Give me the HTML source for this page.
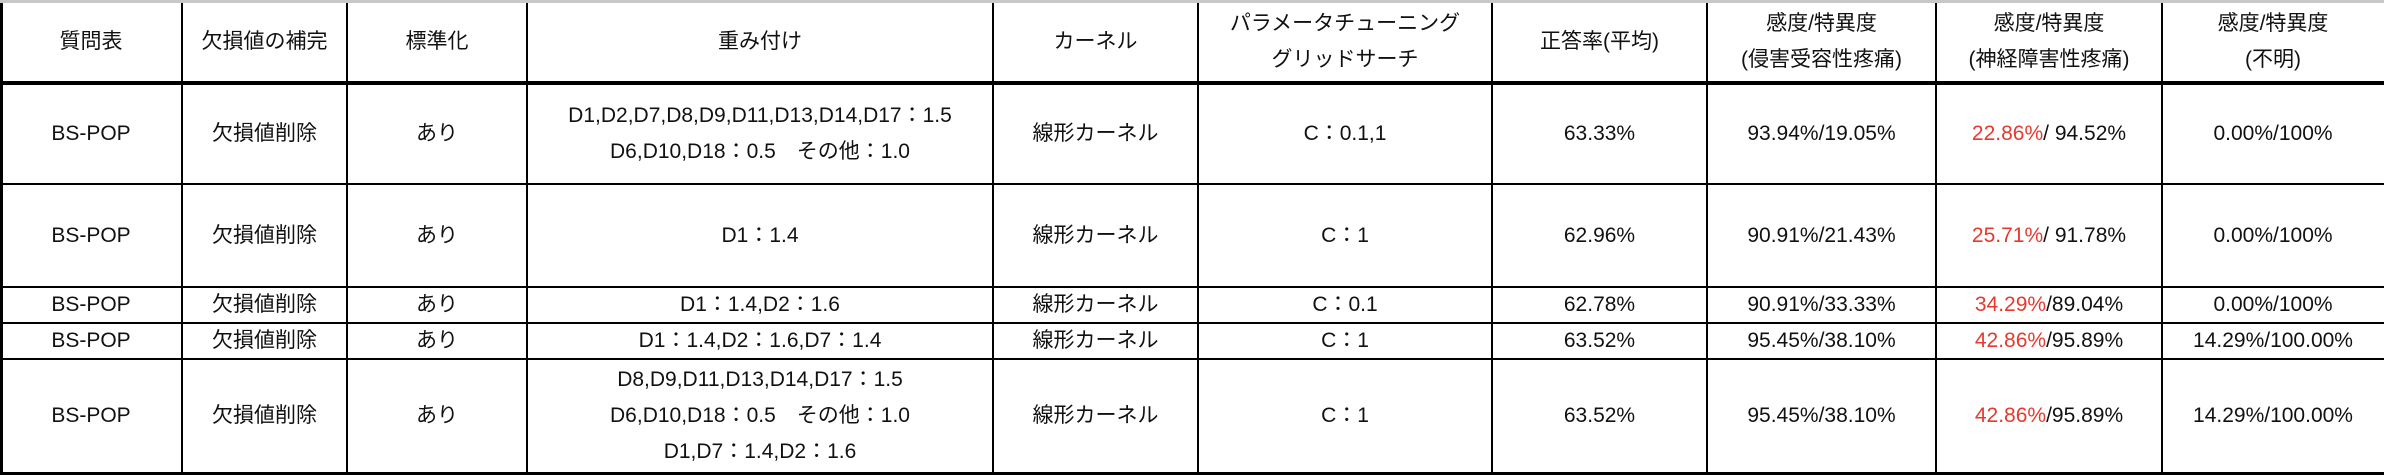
<!DOCTYPE html>
<html><head><meta charset="utf-8"><style>
body{margin:0;width:2384px;height:475px;background:#fff;overflow:hidden;position:relative;font-family:"Liberation Sans","Noto Sans CJK JP",sans-serif;font-size:21px;color:#111}
.c{position:absolute;display:flex;flex-direction:column;align-items:center;justify-content:center;text-align:center;line-height:36px;white-space:nowrap}
.h{position:absolute;left:0;width:2384px;background:#000}
.v{position:absolute;width:2px;background:#000}
.r{color:#e53a2e}
</style></head><body>
<div class="h" style="top:0;height:3px;background:#c8c8c8"></div>
<div class="h" style="top:81px;height:4px"></div>
<div class="h" style="top:183px;height:2px"></div>
<div class="h" style="top:286px;height:2px"></div>
<div class="h" style="top:322px;height:2px"></div>
<div class="h" style="top:358px;height:2px"></div>
<div class="h" style="top:472px;height:3px"></div>
<div class="v" style="left:0;top:3px;height:472px;width:3px"></div>
<div class="v" style="left:181px;top:3px;height:472px"></div>
<div class="v" style="left:346px;top:3px;height:472px"></div>
<div class="v" style="left:526px;top:3px;height:472px"></div>
<div class="v" style="left:992px;top:3px;height:472px"></div>
<div class="v" style="left:1197px;top:3px;height:472px"></div>
<div class="v" style="left:1491px;top:3px;height:472px"></div>
<div class="v" style="left:1706px;top:3px;height:472px"></div>
<div class="v" style="left:1935px;top:3px;height:472px"></div>
<div class="v" style="left:2161px;top:3px;height:472px"></div>
<div id="t"></div>
<script>
var X=[0,182,347,527,993,1198,1492,1707,1936,2162,2384];
var Y=[[3,81],[85,183],[185,286],[288,322],[324,358],[360,472]];
var R=[
["質問表","欠損値の補完","標準化","重み付け","カーネル","パラメータチューニング<br>グリッドサーチ","正答率(平均)","感度/特異度<br>(侵害受容性疼痛)","感度/特異度<br>(神経障害性疼痛)","感度/特異度<br>(不明)"],
["BS-POP","欠損値削除","あり","D1,D2,D7,D8,D9,D11,D13,D14,D17：1.5<br>D6,D10,D18：0.5　その他：1.0","線形カーネル","C：0.1,1","63.33%","93.94%/19.05%","<span><span class=r>22.86%</span>/ 94.52%</span>","0.00%/100%"],
["BS-POP","欠損値削除","あり","D1：1.4","線形カーネル","C：1","62.96%","90.91%/21.43%","<span><span class=r>25.71%</span>/ 91.78%</span>","0.00%/100%"],
["BS-POP","欠損値削除","あり","D1：1.4,D2：1.6","線形カーネル","C：0.1","62.78%","90.91%/33.33%","<span><span class=r>34.29%</span>/89.04%</span>","0.00%/100%"],
["BS-POP","欠損値削除","あり","D1：1.4,D2：1.6,D7：1.4","線形カーネル","C：1","63.52%","95.45%/38.10%","<span><span class=r>42.86%</span>/95.89%</span>","14.29%/100.00%"],
["BS-POP","欠損値削除","あり","D8,D9,D11,D13,D14,D17：1.5<br>D6,D10,D18：0.5　その他：1.0<br>D1,D7：1.4,D2：1.6","線形カーネル","C：1","63.52%","95.45%/38.10%","<span><span class=r>42.86%</span>/95.89%</span>","14.29%/100.00%"]];
var h="";
R.forEach(function(row,i){row.forEach(function(t,j){
h+='<div class="c" style="left:'+X[j]+'px;width:'+(X[j+1]-X[j])+'px;top:'+Y[i][0]+'px;height:'+(Y[i][1]-Y[i][0])+'px"><div>'+t+'</div></div>';});});
document.getElementById("t").innerHTML=h;
</script>
</body></html>
